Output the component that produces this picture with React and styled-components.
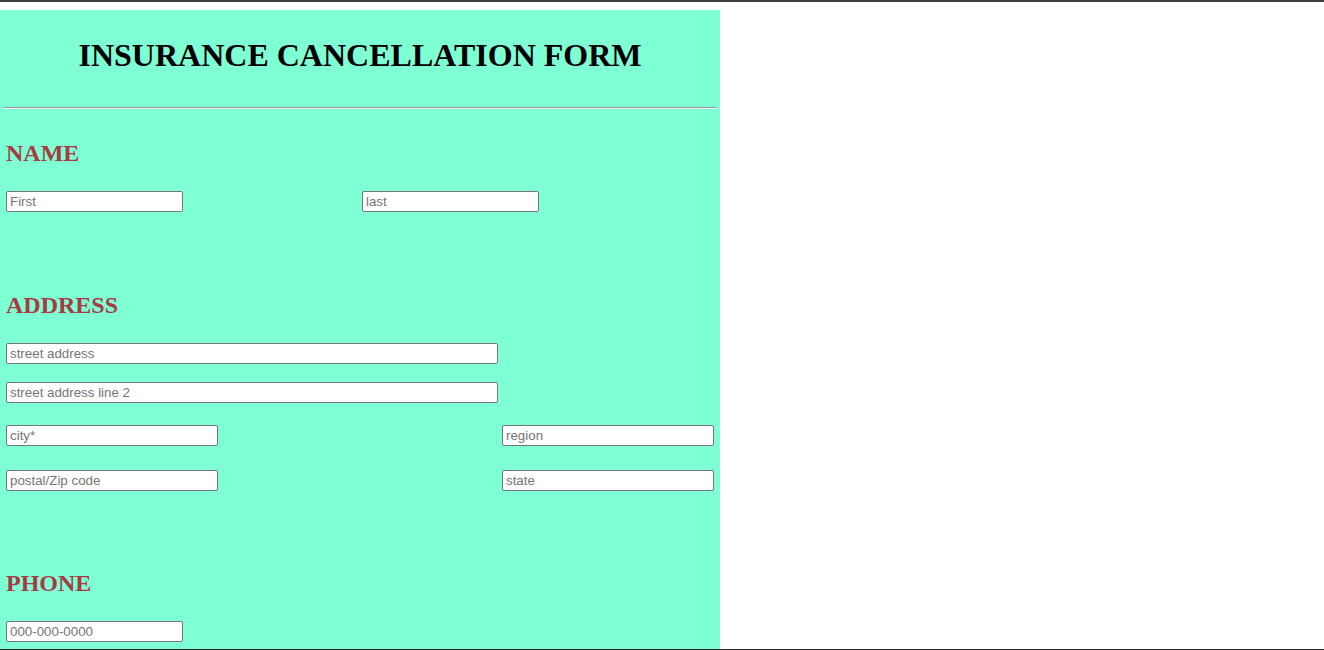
import React from 'react';
import styled, { createGlobalStyle } from 'styled-components';

const GlobalStyle = createGlobalStyle`
  html, body {
    margin: 0;
    padding: 0;
    background: #ffffff;
  }
  body {
    border-top: 2px solid #3c3c3c;
    padding-top: 8px;
    min-height: 640px;
    box-sizing: border-box;
    font-family: "Liberation Serif", "Times New Roman", serif;
  }
`;

const BottomEdge = styled.div`
  position: fixed;
  left: 0;
  right: 0;
  bottom: 0;
  height: 1px;
  background: #2a2a2a;
`;

const FormCard = styled.div`
  width: 720px;
  min-height: 640px;
  background: #7fffd4;
  padding: 0 3px;
  box-sizing: border-box;
  overflow: hidden;
`;

const Title = styled.h1`
  margin: 27px 0 0;
  text-align: center;
  font-family: "Liberation Serif", "Times New Roman", serif;
  font-size: 32px;
  font-weight: 700;
  line-height: 37px;
  color: #000;
`;

const Divider = styled.hr`
  margin: 33px 0 0;
  height: 0;
  border: none;
  border-top: 1px solid #9a9a9a;
  border-bottom: 1px solid #eeeeee;
`;

const Form = styled.form`
  padding: 0 3px;
`;

const Section = styled.section`
  padding-top: ${({ $top }) => $top}px;
`;

const SectionTitle = styled.h2`
  margin: 0 0 ${({ $gap }) => $gap || 24}px;
  font-family: "Liberation Serif", "Times New Roman", serif;
  font-size: 24px;
  font-weight: 700;
  line-height: 27px;
  color: #a83a44;
`;

const Row = styled.div`
  display: grid;
  grid-template-columns: ${({ $cols }) => $cols};
  margin-top: ${({ $top }) => $top || 0}px;
`;

const Field = styled.input`
  box-sizing: border-box;
  width: ${({ $w }) => $w}px;
  height: 21px;
  margin: 0;
  padding: 1px 3px;
  border: 1px solid #767676;
  border-radius: 2px;
  background: #fff;
  font-family: "Liberation Sans", Arial, sans-serif;
  font-size: 13.33px;
  color: #000;
  outline: none;

  &::placeholder {
    color: #757575;
  }
`;

export default function App() {
  return (
    <>
      <GlobalStyle />
      <FormCard>
        <Title>INSURANCE CANCELLATION FORM</Title>
        <Divider />
        <Form onSubmit={(e) => e.preventDefault()}>
          <Section $top={31}>
            <SectionTitle $gap={24}>NAME</SectionTitle>
            <Row $cols="356px 1fr">
              <Field $w={177} placeholder="First" />
              <Field $w={177} placeholder="last" />
            </Row>
          </Section>

          <Section $top={80}>
            <SectionTitle $gap={24}>ADDRESS</SectionTitle>
            <Row $cols="1fr">
              <Field $w={492} placeholder="street address" />
            </Row>
            <Row $cols="1fr" $top={18}>
              <Field $w={492} placeholder="street address line 2" />
            </Row>
            <Row $cols="496px 1fr" $top={22}>
              <Field $w={212} placeholder="city*" />
              <Field $w={212} placeholder="region" />
            </Row>
            <Row $cols="496px 1fr" $top={24}>
              <Field $w={212} placeholder="postal/Zip code" />
              <Field $w={212} placeholder="state" />
            </Row>
          </Section>

          <Section $top={79}>
            <SectionTitle $gap={24}>PHONE</SectionTitle>
            <Row $cols="1fr">
              <Field $w={177} placeholder="000-000-0000" />
            </Row>
          </Section>
        </Form>
      </FormCard>
      <BottomEdge />
    </>
  );
}
